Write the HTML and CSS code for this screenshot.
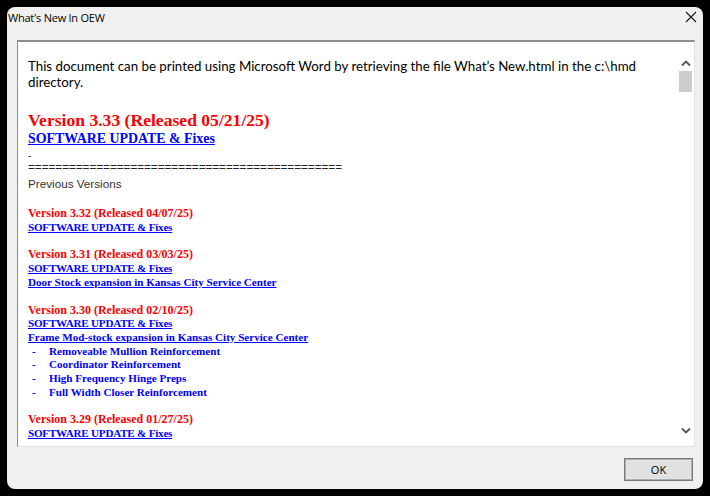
FILE: index.html
```html
<!DOCTYPE html>
<html>
<head>
<meta charset="utf-8">
<link rel="stylesheet" href="styles.css">
</head>
<body>
<div class="window">
  <div class="titlebar">
    <span class="title">What's New In OEW</span>
    <svg class="close" width="12" height="12" viewBox="0 0 12 12"><path d="M1 1 L11 11 M11 1 L1 11" stroke="#1a1a1a" stroke-width="1.1" fill="none"/></svg>
  </div>
  <div class="panel">
    <div class="doc">
      <p class="intro">This document can be printed using Microsoft Word by retrieving the file What’s New.html in the c:\hmd directory.</p>
      <div class="current">
        <div class="ver-big">Version 3.33 (Released 05/21/25)</div>
        <a class="link-big" href="#">SOFTWARE UPDATE &amp; Fixes</a>
      </div>
      <div class="sep">
        <div class="dashline">-</div>
        <div class="eq">==============================================</div>
        <div class="prev">Previous Versions</div>
      </div>
      <div class="rel">
        <div class="ver">Version 3.32 (Released 04/07/25)</div>
        <div><a class="link caps" href="#">SOFTWARE UPDATE &amp; Fixes</a></div>
      </div>
      <div class="rel">
        <div class="ver">Version 3.31 (Released 03/03/25)</div>
        <div><a class="link caps" href="#">SOFTWARE UPDATE &amp; Fixes</a></div>
        <div><a class="link" href="#">Door Stock expansion in Kansas City Service Center</a></div>
      </div>
      <div class="rel">
        <div class="ver">Version 3.30 (Released 02/10/25)</div>
        <div><a class="link caps" href="#">SOFTWARE UPDATE &amp; Fixes</a></div>
        <div><a class="link" href="#">Frame Mod-stock expansion in Kansas City Service Center</a></div>
        <ul class="items">
          <li><span class="dash">-</span>Removeable Mullion Reinforcement</li>
          <li><span class="dash">-</span>Coordinator Reinforcement</li>
          <li><span class="dash">-</span>High Frequency Hinge Preps</li>
          <li><span class="dash">-</span>Full Width Closer Reinforcement</li>
        </ul>
      </div>
      <div class="rel">
        <div class="ver">Version 3.29 (Released 01/27/25)</div>
        <div><a class="link caps" href="#">SOFTWARE UPDATE &amp; Fixes </a></div>
      </div>
    </div>
    <div class="scrollbar">
      <svg class="arrow" width="10" height="7" viewBox="0 0 10 7"><path d="M1 5.5 L5 1.5 L9 5.5" stroke="#555" stroke-width="1.8" fill="none"/></svg>
      <div class="thumb"></div>
      <div class="track"></div>
      <svg class="arrow" width="10" height="7" viewBox="0 0 10 7"><path d="M1 1.5 L5 5.5 L9 1.5" stroke="#555" stroke-width="1.8" fill="none"/></svg>
    </div>
  </div>
  <div class="footer">
    <button class="ok">OK</button>
  </div>
</div>
</body>
</html>
```
FILE: styles.css
```css
html, body {
  margin: 0;
  padding: 0;
  background: #000;
  width: 710px;
  height: 496px;
  overflow: hidden;
}
.window {
  margin: 7px 7px 0 7px;
  width: 696px;
  height: 482px;
  background: #f0f0f0;
  border-radius: 8px;
  display: flex;
  flex-direction: column;
  box-sizing: border-box;
}
.titlebar {
  height: 33px;
  display: flex;
  align-items: flex-start;
  justify-content: space-between;
  padding: 4px 6px 0 1px;
  box-sizing: border-box;
  flex: none;
}
.title {
  font-family: "Open Sans", "Noto Sans", sans-serif;
  font-size: 11px;
  line-height: 14px;
  color: #000;
  letter-spacing: -0.25px;
}
.close { display: block; margin-top: 0; }
.panel {
  margin: 0 8px 0 10px;
  height: 407px;
  flex: none;
  background: #fff;
  border-top: 2px solid #8c8c8c;
  border-left: 1px solid #8c8c8c;
  border-right: 1px solid #e3e3e3;
  border-bottom: 1px solid #e3e3e3;
  box-sizing: border-box;
  display: flex;
  overflow: hidden;
}
.doc {
  flex: 1;
  padding: 16px 10px 0 10px;
  overflow: hidden;
}
.intro {
  margin: 0 0 21px 0;
  font-family: "Lato", "Liberation Sans", sans-serif;
  font-size: 13.3px;
  line-height: 16px;
  color: #000;
}
.current { margin-bottom: 4px; }
.ver-big {
  font-family: "Liberation Serif", serif;
  font-weight: bold;
  font-size: 17.6px;
  line-height: 18px;
  color: #ff0000;
}
.link-big {
  font-family: "Liberation Serif", serif;
  font-weight: bold;
  font-size: 13.9px;
  line-height: 16px;
  color: #0000ff;
  display: inline-block;
}
.sep {
  font-family: "Liberation Sans", sans-serif;
  font-size: 11.7px;
  color: #222;
  margin-bottom: 15px;
}
.dashline { font-size: 10px; line-height: 10px; margin-top: 1px; }
.eq { line-height: 11px; }
.sep .prev { line-height: 16px; margin-top: 4px; color: #333; }
.rel {
  margin-bottom: 14px;
  font-family: "Liberation Serif", serif;
  font-weight: bold;
  font-size: 11.1px;
  line-height: 13.7px;
}
.ver { color: #ff0000; font-size: 12px; }
.link { color: #0000ff; text-decoration: underline; }
.caps { letter-spacing: -0.22px; }
.items {
  list-style: none;
  margin: 0;
  padding: 0;
  color: #0000ff;
}
.items li { display: flex; }
.dash { width: 21px; padding-left: 4px; box-sizing: border-box; flex: none; }
.scrollbar {
  width: 17px;
  flex: none;
  background: #fff;
  display: flex;
  flex-direction: column;
  align-items: center;
  padding: 18px 0 12px 0;
  box-sizing: border-box;
}
.arrow { display: block; flex: none; }
.thumb {
  width: 13px;
  height: 21px;
  background: #cdcdcd;
  margin-top: 4px;
  flex: none;
}
.track { flex: 1; }
.footer {
  flex: 1;
  display: flex;
  justify-content: flex-end;
  align-items: flex-start;
  padding: 12px 11px 0 0;
}
.ok {
  width: 67px;
  height: 21px;
  background: #e1e1e1;
  border: 1px solid #adadad;
  box-shadow: inset 0 0 0 1px #e5e5e5;
  font-family: "Open Sans", "Noto Sans", sans-serif;
  font-size: 11px;
  color: #000;
  padding: 0;
  outline: 1px solid #7a7a7a;
}
```
